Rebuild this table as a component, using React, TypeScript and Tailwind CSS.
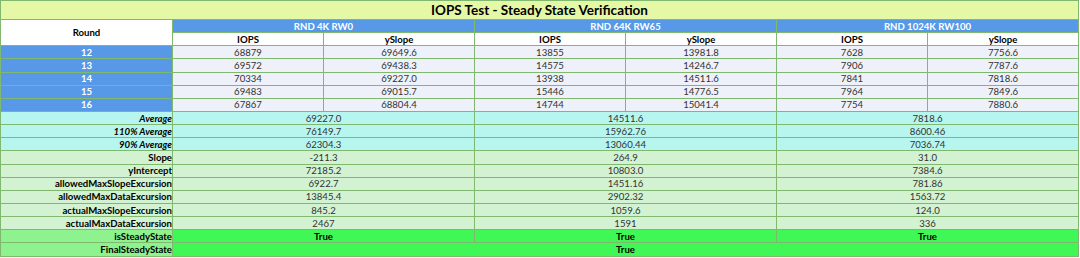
import React from 'react';

const groups = [
  {
    name: 'RND 4K RW0',
    rows: [
      ['68879', '69649.6'],
      ['69572', '69438.3'],
      ['70334', '69227.0'],
      ['69483', '69015.7'],
      ['67867', '68804.4'],
    ],
  },
  {
    name: 'RND 64K RW65',
    rows: [
      ['13855', '13981.8'],
      ['14575', '14246.7'],
      ['13938', '14511.6'],
      ['15446', '14776.5'],
      ['14744', '15041.4'],
    ],
  },
  {
    name: 'RND 1024K RW100',
    rows: [
      ['7628', '7756.6'],
      ['7906', '7787.6'],
      ['7841', '7818.6'],
      ['7964', '7849.6'],
      ['7754', '7880.6'],
    ],
  },
];

const averages = [
  { label: 'Average', values: ['69227.0', '14511.6', '7818.6'] },
  { label: '110% Average', values: ['76149.7', '15962.76', '8600.46'] },
  { label: '90% Average', values: ['62304.3', '13060.44', '7036.74'] },
];

const stats = [
  { label: 'Slope', values: ['-211.3', '264.9', '31.0'] },
  { label: 'yIntercept', values: ['72185.2', '10803.0', '7384.6'] },
  { label: 'allowedMaxSlopeExcursion', values: ['6922.7', '1451.16', '781.86'] },
  { label: 'allowedMaxDataExcursion', values: ['13845.4', '2902.32', '1563.72'] },
  { label: 'actualMaxSlopeExcursion', values: ['845.2', '1059.6', '124.0'] },
  { label: 'actualMaxDataExcursion', values: ['2467', '1591', '336'] },
];

const cell = 'border border-[#7fb86e] p-0 h-[13.15px] leading-[11px]';

export default function App() {
  return (
    <div className="w-[1080px] h-[258px] bg-white" style={{ fontFamily: 'Lato, "Noto Sans", sans-serif' }}>
      <table className="table-fixed border-collapse w-[1079px] text-[9.6px] text-[#333]">
        <colgroup>
          <col className="w-[172px]" />
          <col className="w-[151px]" />
          <col className="w-[151px]" />
          <col className="w-[151px]" />
          <col className="w-[151px]" />
          <col className="w-[151px]" />
          <col className="w-[151px]" />
        </colgroup>
        <tbody>
          <tr>
            <td colSpan={7} className="border border-[#7fb86e] bg-[#e5f8a6] p-0 h-[19px] text-center text-[13.5px] font-bold leading-[16px] text-black">
              IOPS Test - Steady State Verification
            </td>
          </tr>
          <tr>
            <td rowSpan={2} className={`${cell} bg-white text-center font-bold text-black`}>
              Round
            </td>
            {groups.map(g => (
              <td key={g.name} colSpan={2} className={`${cell} bg-[#5799e6] text-center font-bold text-white`}>
                {g.name}
              </td>
            ))}
          </tr>
          <tr>
            {groups.map(g => (
              <React.Fragment key={g.name}>
                <td className={`${cell} bg-white text-center font-bold text-black`}>IOPS</td>
                <td className={`${cell} bg-white text-center font-bold text-black`}>ySlope</td>
              </React.Fragment>
            ))}
          </tr>
          {[12, 13, 14, 15, 16].map((round, i) => (
            <tr key={round}>
              <td className={`${cell} bg-[#5799e6] text-center font-bold text-white`}>{round}</td>
              {groups.map(g => (
                <React.Fragment key={g.name}>
                  <td className={`${cell} bg-[#eef0fa] text-center`}>{g.rows[i][0]}</td>
                  <td className={`${cell} bg-[#eef0fa] text-center`}>{g.rows[i][1]}</td>
                </React.Fragment>
              ))}
            </tr>
          ))}
          {averages.map(row => (
            <tr key={row.label} className="bg-[#b6f6ef]">
              <td className={`${cell} text-right font-bold italic text-black`}>{row.label}</td>
              {row.values.map((v, i) => (
                <td key={i} colSpan={2} className={`${cell} text-center`}>{v}</td>
              ))}
            </tr>
          ))}
          {stats.map(row => (
            <tr key={row.label} className="bg-[#d2f2d2]">
              <td className={`${cell} text-right font-bold text-black`}>{row.label}</td>
              {row.values.map((v, i) => (
                <td key={i} colSpan={2} className={`${cell} text-center`}>{v}</td>
              ))}
            </tr>
          ))}
          <tr>
            <td className={`${cell} bg-[#8ef28e] text-right font-bold text-black`}>isSteadyState</td>
            {[0, 1, 2].map(i => (
              <td key={i} colSpan={2} className={`${cell} bg-[#40f855] text-center font-bold text-black`}>True</td>
            ))}
          </tr>
          <tr>
            <td className={`${cell} bg-[#8ef28e] text-right font-bold text-black`}>FinalSteadyState</td>
            <td colSpan={6} className={`${cell} bg-[#40f855] text-center font-bold text-black`}>True</td>
          </tr>
        </tbody>
      </table>
    </div>
  );
}
